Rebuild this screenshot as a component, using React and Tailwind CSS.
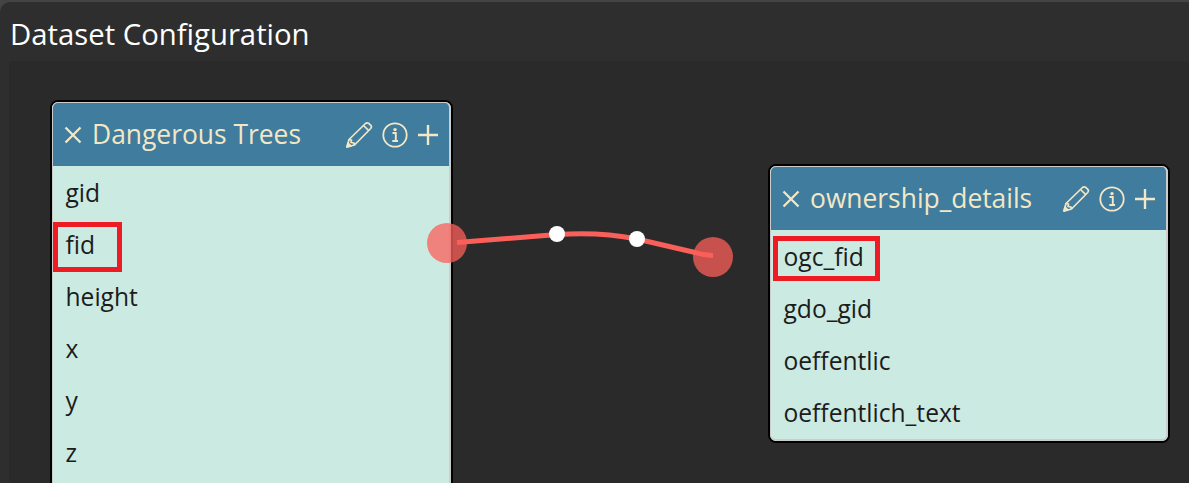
const leftFields = ["gid", "fid", "height", "x", "y", "z"];
const rightFields = ["ogc_fid", "gdo_gid", "oeffentlic", "oeffentlich_text"];

function CloseIcon() {
  return (
    <svg width="18" height="18" viewBox="0 0 18 18" fill="none" stroke="#f3e7c5" strokeWidth="2.3">
      <path d="M1.5 1.5 L16.5 16.5 M16.5 1.5 L1.5 16.5" />
    </svg>
  );
}

function PencilIcon() {
  return (
    <svg width="28" height="28" viewBox="0 0 28 28" fill="none" stroke="#f3e7c5" strokeWidth="1.7" strokeLinejoin="round">
      <path d="M2 26 L4 18.5 L20.5 2.5 Q22 1.2 23.5 2.2 L26 4.6 Q27 6 25.7 7.5 L9.5 24 Z" />
      <path d="M4 18.5 L6.5 19 L6 21.5 L9 22 L9.5 24" />
      <path d="M18.5 4.5 L23.8 9.6" />
      <path d="M2 26 L3 22 L6 25 Z" fill="#f3e7c5" />
    </svg>
  );
}

function InfoIcon() {
  return (
    <svg width="26" height="26" viewBox="0 0 26 26" fill="none" stroke="#f3e7c5">
      <circle cx="13" cy="13" r="11.7" strokeWidth="1.8" />
      <circle cx="13" cy="7.6" r="1.7" fill="#f3e7c5" stroke="none" />
      <path d="M10.5 11 H13.8 V18.6 M10.3 19 H16" strokeWidth="1.9" />
    </svg>
  );
}

function PlusIcon() {
  return (
    <svg width="22" height="22" viewBox="0 0 22 22" fill="none" stroke="#f3e7c5" strokeWidth="2.4">
      <path d="M11 1 V21 M1 11 H21" />
    </svg>
  );
}

function DatasetCard({ title, fields, className, bodyClassName }) {
  return (
    <div className={`absolute rounded-lg border-2 border-black bg-[#cccccc] ${className}`}>
      <div className="overflow-hidden rounded-md border border-r-2 border-b-2 border-[#cccccc]">
        <div className="flex h-[63px] items-center bg-[#3f7c9e] pl-[11px] pr-[10px] text-[#f3e7c5]">
          <CloseIcon />
          <span className="ml-[10px] text-[26.4px] leading-none">{title}</span>
          <div className="ml-auto flex items-center gap-[9px]">
            <PencilIcon />
            <InfoIcon />
            <PlusIcon />
          </div>
        </div>
        <div className={`bg-[#cbeae2] pt-px ${bodyClassName}`}>
          {fields.map((f) => (
            <div key={f} className="flex h-[52px] items-center pl-[12.5px] text-[24.6px] text-[#1c1c1c]">
              {f}
            </div>
          ))}
        </div>
      </div>
    </div>
  );
}

export default function App() {
  return (
    <div className="relative h-[483px] w-[1189px] overflow-hidden bg-[#444444] pt-[2px] font-['Open_Sans',sans-serif]">
      <div className="flex h-[481px] flex-col rounded-tl-[10px] bg-[#2e2e2e]">
        <div className="flex h-[59px] items-center pl-[10px] pt-[6px] text-[29.3px] text-white">Dataset Configuration</div>
        <div className="relative ml-[9px] flex-1 bg-[#2a2a2a]" />
      </div>

      <DatasetCard title="Dangerous Trees" fields={leftFields} className="left-[50px] top-[100px] w-[403px]" bodyClassName="pb-[40px]" />
      <DatasetCard title="ownership_details" fields={rightFields} className="left-[768px] top-[164px] w-[402px]" />

      {/* red annotation boxes */}
      <div className="absolute left-[53px] top-[222px] h-[50px] w-[69px] border-[5px] border-[#ed1c24]" />
      <div className="absolute left-[773px] top-[236px] h-[45px] w-[107px] border-[5px] border-[#ed1c24]" />

      {/* link between the two fields */}
      <svg className="absolute left-0 top-0" width="1189" height="483" fill="none">
        <circle cx="447" cy="243" r="20" fill="#fb5f5a" fillOpacity="0.75" />
        <circle cx="713" cy="257" r="20" fill="#fb5f5a" fillOpacity="0.75" />
        <path d="M457 242.5 L557 234.5 C585 232.5 612 234 637 239 L695 252.5 Q704 255.5 713 255.5" stroke="#fb5f5a" strokeWidth="5" />
        <circle cx="557" cy="234" r="8" fill="#ffffff" />
        <circle cx="637" cy="239" r="8" fill="#ffffff" />
      </svg>
    </div>
  );
}
